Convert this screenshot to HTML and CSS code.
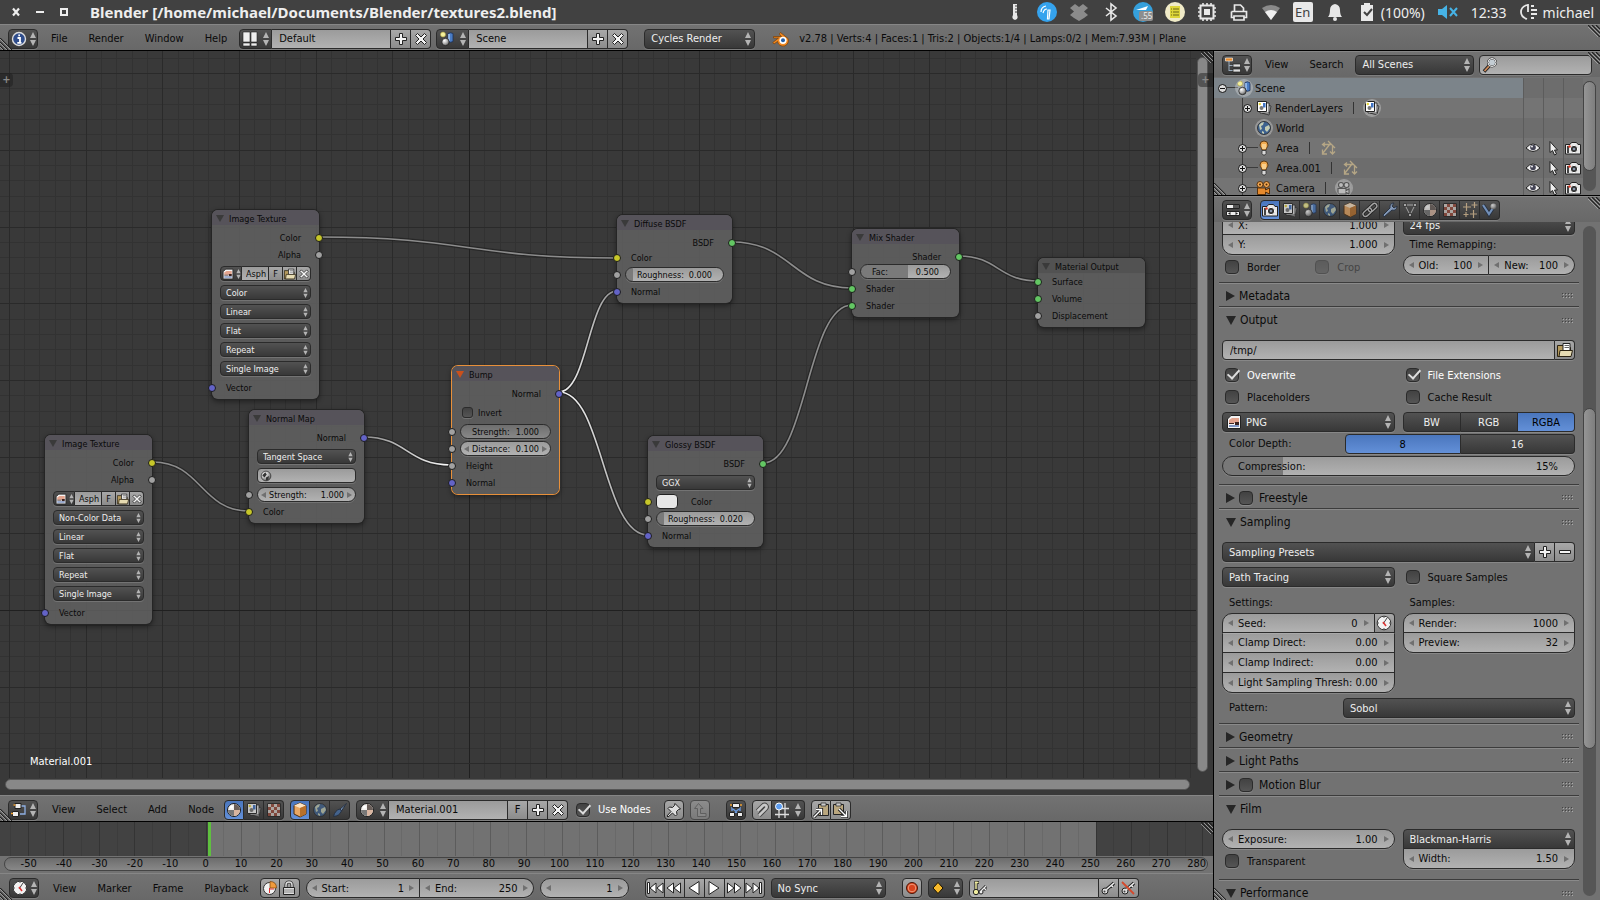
FILE: index.html
```html
<!DOCTYPE html>
<html lang="en">
  <head>
    <meta charset="UTF-8" />
    <meta name="viewport" content="width=device-width, initial-scale=1.0" />
    <title>Blender [/home/michael/Documents/Blender/textures2.blend]</title>
    <link rel="stylesheet" href="styles.css">
  </head>
  <body>
    <!-- icon set -->
    <svg class="sprite" width="0" height="0" aria-hidden="true">
      <defs>
        <radialGradient id="ballFill" cx="35%" cy="30%" r="75%">
          <stop offset="0" stop-color="#fff" />
          <stop offset="0.5" stop-color="#bbb" />
          <stop offset="1" stop-color="#555" />
        </radialGradient>
        <linearGradient id="linkOut" x1="0" x2="1">
          <stop offset="0" stop-color="#fff" />
          <stop offset="1" stop-color="#8c8c8c" />
        </linearGradient>
        <linearGradient id="linkIn" x1="0" x2="1">
          <stop offset="0" stop-color="#8c8c8c" />
          <stop offset="1" stop-color="#fff" />
        </linearGradient>
        <symbol id="arrows" viewBox="0 0 6 14">
          <path d="M3 0L6 6H0ZM3 14L0 8H6Z" fill="#b4b4b4" />
        </symbol>
        <symbol id="dots" viewBox="0 0 11 5">
          <path d="M0 1h1M3 1h1M6 1h1M9 1h1M0 4h1M3 4h1M6 4h1M9 4h1" stroke="#444" transform="translate(0 -.5)" />
          <path d="M1 2h1M4 2h1M7 2h1M10 2h1M1 5h1M4 5h1M7 5h1M10 5h1" stroke="#aaa" transform="translate(0 -.5)" />
        </symbol>
        <symbol id="grip" viewBox="0 0 12 12">
          <path d="M0 0L12 12M4 0L12 8M8 0L12 4" stroke="#222" stroke-width="1.2" />
          <path d="M-1 1L11 13M3 1L12 10M7 1L12 6" stroke="#aaa" stroke-width="0.8" />
        </symbol>
        <symbol id="gripBottom" viewBox="0 0 12 12">
          <path d="M0 0L12 12M0 4L8 12M0 8L4 12" stroke="#222" stroke-width="1.2" />
          <path d="M0 1L11 12M0 5L7 12M0 9L3 12" stroke="#aaa" stroke-width="0.8" />
        </symbol>
        <symbol id="plus" viewBox="0 0 16 16">
          <path d="M6.500 2.500h3v4h4v3h-4v4h-3v-4h-4v-3h4Z" fill="#f4f4f4" stroke="#222" />
        </symbol>
        <symbol id="minus" viewBox="0 0 16 16">
          <path d="M2.500 6.500h11v3h-11Z" fill="#f4f4f4" stroke="#222" />
        </symbol>
        <symbol id="cross" viewBox="0 0 16 16">
          <path d="M4.500 2.500L8 6l3.500-3.500 2 2L10 8l3.500 3.500-2 2L8 10l-3.500 3.500-2-2L6 8 2.500 4.500Z" fill="#f4f4f4" stroke="#222" />
        </symbol>
        <symbol id="info" viewBox="0 0 16 16">
          <circle cx="8" cy="8" r="6.500" fill="#2f4d8c" stroke="#ddd" stroke-width="1.400" />
          <path d="M6.500 7H9v4.500M6.300 11.800h4.200M7.300 4.300h1.700" stroke="#fff" stroke-width="1.800" fill="none" />
        </symbol>
        <symbol id="screen" viewBox="0 0 16 16">
          <path d="M1 1h7v10H1ZM9 1h6v10H9ZM1 12h7v3H1ZM9 12h6v3H9Z" fill="#eee" stroke="#222" stroke-width="0.600" />
        </symbol>
        <symbol id="scene" viewBox="0 0 16 16">
          <circle cx="4" cy="3.500" r="2.500" fill="#f4ef9c" stroke="#a99f3c" stroke-width="0.600" />
          <path d="M9 2.500q2.500-1.500 5 0v8q-2.500 1.500-5 0Z" fill="#4a7cc4" stroke="#1b2f55" stroke-width="0.800" />
          <path d="M10 3v7" stroke="#a6c8f5" stroke-width="1.500" />
          <circle cx="6.500" cy="11" r="3.700" fill="url(#ballFill)" stroke="#222" stroke-width="0.800" />
        </symbol>
        <symbol id="layers" viewBox="0 0 16 16">
          <path d="M6 4.500L15 6l-2 9-7-2Z" fill="#ccc" stroke="#222" stroke-width="0.800" />
          <path d="M4 3h9v10H4Z" fill="#e6e6e6" stroke="#222" stroke-width="0.800" />
          <path d="M1.500 1.500h9v10h-9Z" fill="#fff" stroke="#222" />
          <path d="M7 3h2.500v4.500H7Z" fill="#3f74c6" />
          <circle cx="5.500" cy="8" r="2" fill="#777" />
          <circle cx="3.800" cy="4" r="1.200" fill="#e8d838" />
        </symbol>
        <symbol id="world" viewBox="0 0 16 16">
          <circle cx="8" cy="8" r="6.500" fill="#3e628f" stroke="#222" stroke-width="0.800" />
          <path d="M3 5q2-3 5-3l-1 3-2 1 1 3-2 1ZM9 7l4-2 1 3-3 4-2-2ZM6 11l2 1v2l-2-1Z" fill="#c3ccb4" />
        </symbol>
        <symbol id="lamp" viewBox="0 0 16 16">
          <path d="M8 1a4 4 0 0 1 4 4c0 2-2 3-2 5H6C6 8 4 7 4 5a4 4 0 0 1 4-4Z" fill="#f0aa50" stroke="#52310d" stroke-width="0.900" />
          <path d="M6 10.500h4v3l-1 1.500H7l-1-1.500Z" fill="#d8d8d8" stroke="#333" stroke-width="0.800" />
          <path d="M7 4v5M9 4v5" stroke="#fff3c8" />
        </symbol>
        <symbol id="lampdata" viewBox="0 0 16 16">
          <path d="M8 1l7 7M3 4.500h8M5 2.500L2.500 4.500 5 6.500M10 4L3 13M2.500 9.500V14H7M12.500 6v8M10 11.500l2.500 2.500 2.500-2.500" stroke="#b5a685" stroke-width="1.300" fill="none" />
        </symbol>
        <symbol id="moviecam" viewBox="0 0 16 16">
          <path d="M1.500 8h8v2l4-2v6l-4-2v2.500h-8Z" fill="#e58a2e" stroke="#4f2904" stroke-width="0.900" />
          <circle cx="4" cy="4.500" r="3" fill="#f3a955" stroke="#4f2904" stroke-width="0.900" />
          <circle cx="10.500" cy="4.500" r="3" fill="#f3a955" stroke="#4f2904" stroke-width="0.900" />
          <circle cx="4" cy="4.500" r="1" fill="#4f2904" />
          <circle cx="10.500" cy="4.500" r="1" fill="#4f2904" />
        </symbol>
        <symbol id="camdata" viewBox="0 0 16 16">
          <g fill="#bbb" stroke="#555" stroke-width="1.100">
            <path d="M2 8.500h8v2l3-1.500v5l-3-1.500V14H2Z" />
            <circle cx="5" cy="5" r="2.500" />
            <circle cx="10.500" cy="5" r="2.500" />
          </g>
        </symbol>
        <symbol id="camera" viewBox="0 0 16 16">
          <path d="M0.500 4.500H5L6.500 2.500h5L13 4.500h2.500v9.500h-15Z" fill="#e8e8e8" stroke="#222" />
          <path d="M2 6h2v7H2Z" fill="#444" />
          <circle cx="9" cy="9" r="3.700" fill="#333" stroke="#fff" />
          <circle cx="9" cy="9" r="1.300" fill="#8895aa" />
          <circle cx="4.500" cy="6.500" r="1.200" fill="#e03a24" />
        </symbol>
        <symbol id="cursor" viewBox="0 0 16 16">
          <path d="M5 1.500V12.500L7.500 10.500 9.500 15l2-1-2-4H12.500Z" fill="#eee" stroke="#222" />
        </symbol>
        <symbol id="eye" viewBox="0 0 16 16">
          <path d="M1 8q7-8 14 0q-7 7-14 0Z" fill="#eee" stroke="#222" />
          <circle cx="8" cy="7.500" r="2.800" fill="#445" />
          <circle cx="7" cy="6.500" r="0.900" fill="#fff" />
        </symbol>
        <symbol id="tree" viewBox="0 0 16 16">
          <path d="M4 4v10M4 8.500h5M4 13.500h5" stroke="#9ab" />
          <path d="M0.500 1h7v3h-7Z" fill="#e58a2e" stroke="#fff" stroke-width="0.600" />
          <path d="M8 7h7.500v3H8ZM8 12h7.500v3H8Z" fill="#ddd" stroke="#222" stroke-width="0.700" />
        </symbol>
        <symbol id="search" viewBox="0 0 16 16">
          <path d="M8 8L2 14.500" stroke="#222" stroke-width="3.500" />
          <path d="M8 8L2.500 14" stroke="#d08a58" stroke-width="1.800" />
          <circle cx="10" cy="5.500" r="4" fill="#c4cdd4" stroke="#333" stroke-width="2" />
          <circle cx="10" cy="5.500" r="4" fill="none" stroke="#f4f4f4" />
        </symbol>
        <symbol id="props" viewBox="0 0 16 16">
          <path d="M1.500 2.500h13v4h-13ZM1.500 9.500h13v4h-13Z" fill="#eee" stroke="#222" />
          <path d="M8 3h6v3H8Z" fill="#555" />
          <path d="M5.500 10v3L3 11.500ZM10.500 10v3l2.500-1.500Z" fill="#222" />
        </symbol>
        <symbol id="cube" viewBox="0 0 16 16">
          <path d="M8 1l6 2.500v8.500L8 15 2 12V3.500Z" fill="#e9a763" stroke="#4d2b0a" />
          <path d="M2 3.500L8 6l6-2.500L8 1Z" fill="#fbe3c4" />
          <path d="M8 6v9l6-3V3.500Z" fill="#b9712b" />
        </symbol>
        <symbol id="chain" viewBox="0 0 16 16">
          <g fill="none" transform="rotate(-42 8 8)">
            <path d="M2 5.500h5a2.500 2.500 0 0 1 0 5H2a2.500 2.500 0 0 1 0-5ZM9 5.500h5a2.500 2.500 0 0 1 0 5H9a2.500 2.500 0 0 1 0-5Z" stroke="#111" stroke-width="3" />
            <path d="M2 5.500h5a2.500 2.500 0 0 1 0 5H2a2.500 2.500 0 0 1 0-5ZM9 5.500h5a2.500 2.500 0 0 1 0 5H9a2.500 2.500 0 0 1 0-5Z" stroke="#ccc" stroke-width="1.400" />
          </g>
        </symbol>
        <symbol id="wrench" viewBox="0 0 16 16">
          <path d="M2 15l-1-2 7-7c-.5-3 1-5 4-5l-2 3 2 2 3-2c0 3-2 5-5 4Z" fill="#9dbbe6" stroke="#1c2a40" />
        </symbol>
        <symbol id="mesh" viewBox="0 0 16 16">
          <path d="M3 3h10L8 13Z" fill="none" stroke="#ccc" />
          <path d="M1.500 1.500h3v3h-3ZM11.500 1.500h3v3h-3ZM6.500 11.500h3v3h-3Z" fill="#ccc" stroke="#222" stroke-width="0.800" />
        </symbol>
        <symbol id="material" viewBox="0 0 16 16">
          <circle cx="8" cy="8" r="6.500" fill="#f3f0ed" stroke="#1a1a1a" />
          <path d="M8 2a6 6 0 0 1 6 6H8Z" fill="#6a5f5a" />
          <path d="M8 14a6 6 0 0 1-6-6h6Z" fill="#777" />
          <path d="M8 8h6a6 6 0 0 1-6 6Z" fill="#d9b5a0" />
          <circle cx="5.500" cy="5" r="1.500" fill="#fff" />
        </symbol>
        <symbol id="texture" viewBox="0 0 16 16">
          <path d="M1.500 1.500h13v13h-13Z" fill="#d8cfc9" stroke="#222" />
          <path d="M5 2h3v3H5ZM11 2h3v3h-3ZM2 5h3v3H2ZM8 5h3v3H8ZM5 8h3v3H5ZM11 8h3v3h-3ZM2 11h3v3H2ZM8 11h3v3H8Z" fill="#9b4a3a" />
        </symbol>
        <symbol id="particles" viewBox="0 0 16 16">
          <path d="M4.500 1v8M1 5h8M12.500 0v6M9.500 3h6M11.500 8v8M8 12h7M4 10v5M1.500 12.500h5" stroke="#e6c79b" stroke-width="1.200" />
        </symbol>
        <symbol id="physics" viewBox="0 0 16 16">
          <path d="M1 3l6 9 4-6" fill="none" stroke="#1c2a40" stroke-width="4" />
          <path d="M1 3l6 9 4-6" fill="none" stroke="#86b0ea" stroke-width="2.200" />
          <circle cx="11.500" cy="4.500" r="3" fill="url(#ballFill)" />
        </symbol>
        <symbol id="folder" viewBox="0 0 16 16">
          <path d="M0.500 3.500h6l1 2h6v9h-13Z" fill="#b59a5d" stroke="#2c2413" />
          <path d="M6 1.500h7v7H6Z" fill="#fff" stroke="#222" />
          <path d="M7.500 3.500H12M7.500 5.500H12" stroke="#666" />
          <path d="M3 8.500h12.500l-1.500 6H2Z" fill="#e6dbb2" stroke="#2c2413" />
        </symbol>
        <symbol id="image" viewBox="0 0 16 16">
          <path d="M5 1.500h9.500v13h-13V5Z" fill="#f4f4f4" stroke="#222" />
          <path d="M6 4h7v5H3V6Z" fill="#e3a48e" />
          <path d="M3 9h5v1H3ZM9 8h4v3H9Z" fill="#3b2320" />
          <path d="M3 11h10v2H3Z" fill="#7f96c4" />
        </symbol>
        <symbol id="nodes" viewBox="0 0 16 16">
          <path d="M10 4h4v8H9" stroke="#8fb0e4" stroke-width="1.300" fill="none" />
          <path d="M4 1.500h6v5H4ZM1.500 9.500h6v5h-6Z" fill="#eee" stroke="#222" />
          <path d="M2.500 3h2M0 11.500h2" stroke="#f0a030" stroke-width="1.500" />
        </symbol>
        <symbol id="brush" viewBox="0 0 16 16">
          <path d="M14.500 1.500L8 7l1.500 2Z" fill="#88aede" stroke="#1c2a40" />
          <path d="M8 7q-5 1-6.500 7.500Q7.500 14 9.500 9Z" fill="#4672ad" stroke="#1c2a40" />
        </symbol>
        <symbol id="pin" viewBox="0 0 16 16">
          <path d="M9 1.500l5.500 5.500-2 .5-2 2 .5 3-1.500 1.500-3-3L2 15l-1-1 4-4.500-3-3L3.500 5l3 .5 2-2Z" fill="#ddd" stroke="#222" />
        </symbol>
        <symbol id="parent" viewBox="0 0 16 16">
          <path d="M6.500 1.500l4.500 5H8.500v5H14v3H5.500v-8H2.500Z" fill="#a5a5a5" stroke="#555" />
        </symbol>
        <symbol id="autosnap" viewBox="0 0 16 16">
          <path d="M4 5v4M12 5v4M5 7l6 5M11 7l-6 5" stroke="#6c9be0" stroke-width="1.400" />
          <path d="M4.500 1.500h7v4h-7ZM1.500 10.500h5v4h-5ZM9.500 10.500h5v4h-5Z" fill="#eee" stroke="#222" />
          <path d="M2 3h2M12 3h2" stroke="#f0a030" stroke-width="1.500" />
        </symbol>
        <symbol id="magnet" viewBox="0 0 16 16">
          <path d="M4 13.500L10.500 7q2-2 .5-3.500t-3.500.5L2.500 9" fill="none" stroke="#444" stroke-width="4.500" transform="translate(1 0)" />
          <path d="M4 13.500L10.500 7q2-2 .5-3.500t-3.500.5L2.500 9" fill="none" stroke="#c8c8c8" stroke-width="2.500" transform="translate(1 0)" />
        </symbol>
        <symbol id="snapgrid" viewBox="0 0 16 16">
          <path d="M5 8v8M11 1v15M1 12.500h14M8 6.500h7" stroke="#ddd" stroke-width="1.300" />
          <circle cx="5" cy="4.500" r="3.500" fill="#5d9df0" stroke="#fff" />
        </symbol>
        <symbol id="copy" viewBox="0 0 16 16">
          <path d="M5.500 2.500h10v11h-10Z" fill="#b9a67e" stroke="#222" />
          <path d="M8 1h5v3H8Z" fill="#ccc" stroke="#222" stroke-width="0.700" />
          <path d="M1 15l6-6M3 7.500h5.500V13" stroke="#222" stroke-width="3.200" fill="none" />
          <path d="M1 15l6.500-6.500M3 7.500h5.500V13" stroke="#fff" stroke-width="1.400" fill="none" />
        </symbol>
        <symbol id="paste" viewBox="0 0 16 16">
          <path d="M1.500 2.500h10v10h-10Z" fill="#b9a67e" stroke="#222" />
          <path d="M4 1h5v3H4Z" fill="#ccc" stroke="#222" stroke-width="0.700" />
          <path d="M7 7l7 7M9 14.500h5.500V9" stroke="#222" stroke-width="3.200" fill="none" />
          <path d="M7 7l7 7M9 14.500h5.500V9" stroke="#fff" stroke-width="1.400" fill="none" />
        </symbol>
        <symbol id="clock" viewBox="0 0 16 16">
          <circle cx="8" cy="8" r="6.800" fill="#f2f2f2" stroke="#333" />
          <path d="M7 9l4-6" stroke="#444" />
          <path d="M7 7l3 4" stroke="#d33" stroke-width="1.500" />
          <path d="M8 2v1M8 13v1M2 8h1M13 8h1" stroke="#555" />
        </symbol>
        <symbol id="preview" viewBox="0 0 16 16">
          <circle cx="7.500" cy="8.500" r="6" fill="#f2f2f2" stroke="#333" />
          <path d="M8 8V1.500q6.500 0 6.500 6.500Z" fill="#f09a3c" stroke="#7a3f05" stroke-width="0.700" />
          <path d="M7.500 8v5M8 9h4" stroke="#d33" />
        </symbol>
        <symbol id="lock" viewBox="0 0 16 16">
          <path d="M5 8V5a3 3 0 0 1 6 0v3" fill="none" stroke="#333" stroke-width="3.200" />
          <path d="M5 8V5a3 3 0 0 1 6 0v3" fill="none" stroke="#ddd" stroke-width="1.400" />
          <path d="M2.500 7.500h11v7h-11Z" fill="#ddd" stroke="#222" />
          <path d="M3 10h10M3 12h10" stroke="#888" />
        </symbol>
        <symbol id="first" viewBox="0 0 18 16">
          <path d="M1.500 2.500h2v11h-2ZM10 3v10L4 8ZM17 3v10l-6-5Z" fill="#fff" stroke="#222" />
        </symbol>
        <symbol id="prev" viewBox="0 0 18 16">
          <path d="M8.500 3v10L2 8ZM15.500 3v10L9 8Z" fill="#fff" stroke="#222" />
        </symbol>
        <symbol id="back" viewBox="0 0 18 16">
          <path d="M14 1.500v13L4 8Z" fill="#fff" stroke="#222" />
        </symbol>
        <symbol id="magicball" viewBox="0 0 16 16">
          <circle cx="8" cy="8" r="6.500" fill="url(#ballFill)" stroke="#333" />
          <path d="M3 7l4-4 2 3-3 4ZM8 10l4-2-1 5-3 1Z" fill="#333" />
        </symbol>
        <symbol id="record" viewBox="0 0 16 16">
          <circle cx="8" cy="8" r="5.500" fill="#d8431d" stroke="#4a1505" />
          <circle cx="8" cy="8" r="3.800" fill="none" stroke="#f29a78" />
        </symbol>
        <symbol id="keyframe" viewBox="0 0 16 16">
          <path d="M8 2.500L13 8l-5 5.500L3 8Z" fill="#f7b92b" stroke="#1a1200" />
        </symbol>
        <symbol id="key" viewBox="0 0 16 16">
          <path d="M6.500 9.500L14 3M11 5l2 2" stroke="#222" stroke-width="3.600" />
          <circle cx="5" cy="11" r="3" fill="#ddd" stroke="#222" />
          <path d="M6.500 9.500L14 3M11 5l2 2" stroke="#eee" stroke-width="1.600" />
          <circle cx="4.500" cy="11.500" r="1" fill="#444" />
        </symbol>
        <symbol id="keyset" viewBox="0 0 16 16">
          <path d="M4 1v9M3 2.500h4" stroke="#222" stroke-width="3.200" />
          <path d="M4 1.500v9M3 2.500h3.500" stroke="#f1eda0" stroke-width="1.500" />
          <circle cx="4" cy="12" r="2.700" fill="#f1eda0" stroke="#222" />
          <path d="M9 11l5-5M12 8l2 2" stroke="#222" stroke-width="3" />
          <circle cx="9" cy="12" r="2" fill="#eee" stroke="#222" />
          <path d="M9 11l5-5M12 8l2 2" stroke="#eee" stroke-width="1.300" />
        </symbol>
        <symbol id="blender" viewBox="0 0 18 16">
          <path d="M8.500 1.500L16 7.500a5.500 5.500 0 1 1-10.500 3L2 13l-1.200-1.500L6.500 7H1.500V5.500h8L7.300 3Z" fill="#f28a22" stroke="#7a3d05" stroke-width="0.700" />
          <circle cx="11" cy="9.300" r="3.600" fill="#fff" />
          <circle cx="11" cy="9.300" r="2" fill="#2660a8" />
        </symbol>
      </defs>
    </svg>

    <div class="titlebar">
      <div class="window-buttons">
        <button aria-label="Close"><svg width="10" height="10"><path d="M2 1.500L8 8.500M8 1.500L2 8.500" stroke="#eee" stroke-width="2.200" /></svg></button>
        <button aria-label="Minimize"><svg width="10" height="10"><path d="M1 5h8" stroke="#eee" stroke-width="2" /></svg></button>
        <button aria-label="Maximize"><svg width="10" height="10"><path d="M2 2h6v6H2Z" fill="none" stroke="#eee" stroke-width="2" /></svg></button>
      </div>
      <h1>Blender [/home/michael/Documents/Blender/textures2.blend]</h1>
      <div class="tray">
        <svg width="20" height="22"><path d="M8 3h4v11q2 4-2 5-4-1-2-5Z" fill="#e8e8e8" /><path d="M10 5h3M10 8h3M10 11h3" stroke="#414141" /></svg>
        <svg width="20" height="22"><circle cx="10" cy="11" r="10" fill="#35a3ee" /><path d="M11 9h2l-1 9h-1.500ZM10 8Q7 8 6 12M9 5Q4 6 4 11" stroke="#fff" fill="none" stroke-width="1.200" /></svg>
        <svg width="20" height="22"><path d="M6 3l4 3 4-3 5 4-4 3.500 4 3.500-4 3-5 3-5-3-4-3 4-3.500L1 7Z" fill="#8b8b8b" /></svg>
        <svg width="20" height="22"><path d="M5 7l10 8-5 4V3l5 4L5 15" fill="none" stroke="#e8e8e8" stroke-width="1.600" /></svg>
        <svg width="20" height="22"><circle cx="10" cy="11" r="10" fill="#35a0dc" /><path d="M3 9l12-4-2 4Z" fill="#fff" /><rect x="6" y="10" width="14" height="10" rx="2" fill="#8d8d8d" /><text x="8" y="18" font-size="8" fill="#eee">.55</text></svg>
        <svg width="20" height="22"><circle cx="10" cy="11" r="10" fill="#f0ebc8" /><rect x="5" y="5" width="10" height="12" fill="#ded63a" /><path d="M6 8h1M8 8h6M6 11h1M8 11h6M6 14h1M8 14h6" stroke="#6a6614" /></svg>
        <svg width="20" height="22"><path d="M3.500 4.500h13v13h-13Z" fill="none" stroke="#e8e8e8" stroke-width="2" /><path d="M7 8h6v6H7Z" fill="#e8e8e8" /><path d="M6 2v3M10 2v3M14 2v3M6 17v3M10 17v3M14 17v3M1 7h3M1 11h3M1 15h3M16 7h3M16 11h3M16 15h3" stroke="#e8e8e8" stroke-width="1.600" /></svg>
        <svg width="20" height="22"><path d="M5.500 10V4h6l3 3v3M2.500 10.500h15v6h-2M2.500 10.500v6h2M5 15h10v4H5Z" fill="none" stroke="#e8e8e8" stroke-width="1.700" /></svg>
        <svg width="20" height="22"><path d="M1 7q9-6 18 0l-9 12Z" fill="#8a8a8a" /><path d="M4 11q6-4 12 0l-6 8Z" fill="#f0f0f0" /></svg>
        <span class="lang">En</span>
        <svg width="20" height="22"><path d="M3 16q2-2 2-7 0-5 5-6 5 1 5 6 0 5 2 7Z" fill="#e8e8e8" /><circle cx="10" cy="18" r="2" fill="#e8e8e8" /></svg>
        <svg width="20" height="22"><path d="M4 4h3V2h6v2h3v16H4Z" fill="#e8e8e8" /><path d="M7 11l3 3 5-6" fill="none" stroke="#414141" stroke-width="2" /></svg>
        <span class="charge">(100%)</span>
        <svg width="22" height="22"><path d="M1 8h4l5-4v14l-5-4H1Z" fill="#46b3e6" /><path d="M13 7l7 8M20 7l-7 8" stroke="#46b3e6" stroke-width="2" /></svg>
        <span class="time">12:33</span>
        <svg width="20" height="22"><path d="M8 4q-6 2-6 7t6 7M9 3v8M12 5h3M12 9h6M12 13h6M12 17h3" fill="none" stroke="#e8e8e8" stroke-width="1.800" /></svg>
        <span class="user">michael</span>
      </div>
    </div>

    <header class="header info-header">
      <svg class="grip grip-bl"><use href="#gripBottom" /></svg>
      <svg class="grip grip-tr"><use href="#grip" /></svg>
      <button class="dark editor-type" aria-label="Editor type"><svg class="icon"><use href="#info" /></svg><svg class="arrows"><use href="#arrows" /></svg></button>
      <nav class="menus">
        <button>File</button><button>Render</button><button>Window</button><button>Help</button>
      </nav>
      <div class="join id-block">
        <button class="dark id-icon" aria-label="Browse screens"><svg class="icon"><use href="#screen" /></svg><svg class="arrows"><use href="#arrows" /></svg></button>
        <input class="field" type="text" value="Default" aria-label="Screen" />
        <button class="light tool" aria-label="Add screen"><svg class="icon"><use href="#plus" /></svg></button>
        <button class="light tool" aria-label="Delete screen"><svg class="icon"><use href="#cross" /></svg></button>
      </div>
      <div class="join id-block">
        <button class="dark id-icon" aria-label="Browse scenes"><svg class="icon"><use href="#scene" /></svg><svg class="arrows"><use href="#arrows" /></svg></button>
        <input class="field" type="text" value="Scene" aria-label="Scene" />
        <button class="light tool" aria-label="Add scene"><svg class="icon"><use href="#plus" /></svg></button>
        <button class="light tool" aria-label="Delete scene"><svg class="icon"><use href="#cross" /></svg></button>
      </div>
      <span class="menu engine"><select aria-label="Render engine"><option>Cycles Render</option></select><svg class="arrows"><use href="#arrows" /></svg></span>
      <svg class="logo"><use href="#blender" /></svg>
      <span class="stats">v2.78 | Verts:4 | Faces:1 | Tris:2 | Objects:1/4 | Lamps:0/2 | Mem:7.93M | Plane</span>
    </header>

    <main class="workspace">
      <div class="left-column">
        <section class="canvas" id="canvas">
          <svg class="grid" id="grid"></svg>
          <svg class="wires">
            <g fill="none" stroke="#1f1f1f" stroke-width="4" stroke-opacity="0.700">
              <path d="M319 186C468 186 468 207 617 207" />
              <path d="M153 411C201 411 201 460 249 460" />
              <path d="M364 386C407 386 407 414 451 414" />
              <path d="M559 341C588 341 588 240 617 240" />
              <path d="M559 341C603 341 603 484 648 484" />
              <path d="M732 191C792 191 792 237 852 237" />
              <path d="M763 412C807 412 807 254 852 254" />
              <path d="M959 205C998 205 998 230 1038 230" />
            </g>
            <g fill="none" stroke="#8c8c8c" stroke-width="1.600">
              <path d="M319 186C468 186 468 207 617 207" />
              <path d="M153 411C201 411 201 460 249 460" />
              <path d="M364 386C407 386 407 414 451 414" stroke="url(#linkIn)" />
              <path d="M559 341C588 341 588 240 617 240" stroke="url(#linkOut)" />
              <path d="M559 341C603 341 603 484 648 484" stroke="url(#linkOut)" />
              <path d="M732 191C792 191 792 237 852 237" />
              <path d="M763 412C807 412 807 254 852 254" />
              <path d="M959 205C998 205 998 230 1038 230" />
            </g>
          </svg>

          <article class="node image-texture-a">
            <h2>Image Texture</h2>
            <div class="outputs">
              <div class="row">Color<i class="socket yellow"></i></div>
              <div class="row">Alpha<i class="socket gray"></i></div>
            </div>
            <div class="widgets">
              <div class="join">
                <button class="dark image-pick" aria-label="Browse images"><svg class="icon"><use href="#image" /></svg><svg class="arrows"><use href="#arrows" /></svg></button>
                <input class="field" type="text" value="Asph" aria-label="Image name" />
                <button class="light tool">F</button>
                <button class="light tool" aria-label="Open image"><svg class="icon"><use href="#folder" /></svg></button>
                <button class="light tool" aria-label="Unlink image"><svg class="icon"><use href="#cross" /></svg></button>
              </div>
              <span class="menu"><select aria-label="Color space"><option>Color</option></select><svg class="arrows"><use href="#arrows" /></svg></span>
              <span class="menu"><select aria-label="Interpolation"><option>Linear</option></select><svg class="arrows"><use href="#arrows" /></svg></span>
              <span class="menu"><select aria-label="Projection"><option>Flat</option></select><svg class="arrows"><use href="#arrows" /></svg></span>
              <span class="menu"><select aria-label="Extension"><option>Repeat</option></select><svg class="arrows"><use href="#arrows" /></svg></span>
              <span class="menu"><select aria-label="Source"><option>Single Image</option></select><svg class="arrows"><use href="#arrows" /></svg></span>
            </div>
            <div class="row"><i class="socket violet"></i>Vector</div>
          </article>

          <article class="node image-texture-b">
            <h2>Image Texture</h2>
            <div class="outputs">
              <div class="row">Color<i class="socket yellow"></i></div>
              <div class="row">Alpha<i class="socket gray"></i></div>
            </div>
            <div class="widgets">
              <div class="join">
                <button class="dark image-pick" aria-label="Browse images"><svg class="icon"><use href="#image" /></svg><svg class="arrows"><use href="#arrows" /></svg></button>
                <input class="field" type="text" value="Asph" aria-label="Image name" />
                <button class="light tool">F</button>
                <button class="light tool" aria-label="Open image"><svg class="icon"><use href="#folder" /></svg></button>
                <button class="light tool" aria-label="Unlink image"><svg class="icon"><use href="#cross" /></svg></button>
              </div>
              <span class="menu"><select aria-label="Color space"><option>Non-Color Data</option></select><svg class="arrows"><use href="#arrows" /></svg></span>
              <span class="menu"><select aria-label="Interpolation"><option>Linear</option></select><svg class="arrows"><use href="#arrows" /></svg></span>
              <span class="menu"><select aria-label="Projection"><option>Flat</option></select><svg class="arrows"><use href="#arrows" /></svg></span>
              <span class="menu"><select aria-label="Extension"><option>Repeat</option></select><svg class="arrows"><use href="#arrows" /></svg></span>
              <span class="menu"><select aria-label="Source"><option>Single Image</option></select><svg class="arrows"><use href="#arrows" /></svg></span>
            </div>
            <div class="row"><i class="socket violet"></i>Vector</div>
          </article>

          <article class="node wide normal-map">
            <h2>Normal Map</h2>
            <div class="outputs">
              <div class="row">Normal<i class="socket violet"></i></div>
            </div>
            <div class="widgets">
              <span class="menu"><select aria-label="Space"><option>Tangent Space</option></select><svg class="arrows"><use href="#arrows" /></svg></span>
              <label class="iconfield"><svg class="icon"><use href="#magicball" /></svg><input type="text" aria-label="UV map" /></label>
            </div>
            <div class="row"><i class="socket gray"></i><label class="num"><span>Strength:</span><input type="text" value="1.000" /></label></div>
            <div class="row"><i class="socket yellow"></i>Color</div>
          </article>

          <article class="node bump active">
            <h2>Bump</h2>
            <div class="outputs">
              <div class="row">Normal<i class="socket violet"></i></div>
            </div>
            <div class="widgets">
              <label class="check"><input type="checkbox" />Invert</label>
            </div>
            <div class="row"><i class="socket gray"></i><label class="num slider full"><span>Strength:</span><input type="text" value="1.000" /></label></div>
            <div class="row"><i class="socket gray"></i><label class="num"><span>Distance:</span><input type="text" value="0.100" /></label></div>
            <div class="row"><i class="socket gray"></i>Height</div>
            <div class="row"><i class="socket violet"></i>Normal</div>
          </article>

          <article class="node wide diffuse">
            <h2>Diffuse BSDF</h2>
            <div class="outputs">
              <div class="row">BSDF<i class="socket green"></i></div>
            </div>
            <div class="row"><i class="socket yellow"></i>Color</div>
            <div class="row"><i class="socket gray"></i><label class="num slider low"><span>Roughness:</span><input type="text" value="0.000" /></label></div>
            <div class="row"><i class="socket violet"></i>Normal</div>
          </article>

          <article class="node wide glossy">
            <h2>Glossy BSDF</h2>
            <div class="outputs">
              <div class="row">BSDF<i class="socket green"></i></div>
            </div>
            <div class="widgets">
              <span class="menu"><select aria-label="Distribution"><option>GGX</option></select><svg class="arrows"><use href="#arrows" /></svg></span>
            </div>
            <div class="row"><i class="socket yellow"></i><button class="swatch" aria-label="Color"></button>Color</div>
            <div class="row"><i class="socket gray"></i><label class="num slider low"><span>Roughness:</span><input type="text" value="0.020" /></label></div>
            <div class="row"><i class="socket violet"></i>Normal</div>
          </article>

          <article class="node mix">
            <h2>Mix Shader</h2>
            <div class="outputs">
              <div class="row">Shader<i class="socket green"></i></div>
            </div>
            <div class="row"><i class="socket gray"></i><label class="num slider half"><span>Fac:</span><input type="text" value="0.500" /></label></div>
            <div class="row"><i class="socket green"></i>Shader</div>
            <div class="row"><i class="socket green"></i>Shader</div>
          </article>

          <article class="node output">
            <h2>Material Output</h2>
            <div class="row"><i class="socket green"></i>Surface</div>
            <div class="row"><i class="socket green"></i>Volume</div>
            <div class="row"><i class="socket gray"></i>Displacement</div>
          </article>

          <p class="material-name">Material.001</p>
          <button class="region-tab tab-left" aria-label="Show tool shelf">+</button>
          <div class="scroll-y"></div>
          <div class="scroll-x"></div>
          <button class="region-tab tab-right" aria-label="Show properties">+</button>
          <svg class="grip grip-tr"><use href="#grip" /></svg>
        </section>

        <div class="header node-header">
          <svg class="grip grip-bl"><use href="#gripBottom" /></svg>
          <button class="dark editor-type" aria-label="Editor type"><svg class="icon"><use href="#nodes" /></svg><svg class="arrows"><use href="#arrows" /></svg></button>
          <nav class="menus">
            <button>View</button><button>Select</button><button>Add</button><button>Node</button>
          </nav>
          <div class="join">
            <button class="dark tool on" aria-label="Shader nodes"><svg class="icon"><use href="#material" /></svg></button>
            <button class="dark tool dim" aria-label="Compositing nodes"><svg class="icon"><use href="#layers" /></svg></button>
            <button class="dark tool dim" aria-label="Texture nodes"><svg class="icon"><use href="#texture" /></svg></button>
          </div>
          <div class="join">
            <button class="dark tool on" aria-label="Object"><svg class="icon"><use href="#cube" /></svg></button>
            <button class="dark tool dim" aria-label="World"><svg class="icon"><use href="#world" /></svg></button>
            <button class="dark tool dim" aria-label="Line style"><svg class="icon"><use href="#brush" /></svg></button>
          </div>
          <div class="join id-block">
            <button class="dark id-icon" aria-label="Browse materials"><svg class="icon"><use href="#material" /></svg><svg class="arrows"><use href="#arrows" /></svg></button>
            <input class="field" type="text" value="Material.001" aria-label="Material" />
            <button class="light tool">F</button>
            <button class="light tool" aria-label="Add material"><svg class="icon"><use href="#plus" /></svg></button>
            <button class="light tool" aria-label="Unlink material"><svg class="icon"><use href="#cross" /></svg></button>
          </div>
          <label class="check use-nodes"><input type="checkbox" checked />Use Nodes</label>
          <div class="join"><button class="light tool" aria-label="Pin"><svg class="icon"><use href="#pin" /></svg></button></div>
          <div class="join"><button class="light tool off" aria-label="Go to parent"><svg class="icon"><use href="#parent" /></svg></button></div>
          <div class="join spaced"><button class="dark tool" aria-label="Auto-offset"><svg class="icon"><use href="#autosnap" /></svg></button></div>
          <div class="join">
            <button class="light tool" aria-label="Snap"><svg class="icon"><use href="#magnet" /></svg></button>
            <button class="dark id-icon" aria-label="Snap element"><svg class="icon"><use href="#snapgrid" /></svg><svg class="arrows"><use href="#arrows" /></svg></button>
          </div>
          <div class="join">
            <button class="light tool" aria-label="Copy nodes"><svg class="icon"><use href="#copy" /></svg></button>
            <button class="light tool" aria-label="Paste nodes"><svg class="icon"><use href="#paste" /></svg></button>
          </div>
        </div>

        <section class="timeline">
          <svg class="track" id="track"></svg>
          <div class="ruler" id="ruler"></div>
          <svg class="grip grip-tr"><use href="#grip" /></svg>
          <div class="header timeline-header">
            <svg class="grip grip-bl"><use href="#gripBottom" /></svg>
            <button class="dark editor-type" aria-label="Editor type"><svg class="icon"><use href="#clock" /></svg><svg class="arrows"><use href="#arrows" /></svg></button>
            <nav class="menus">
              <button>View</button><button>Marker</button><button>Frame</button><button>Playback</button>
            </nav>
            <div class="join range-tools">
              <button class="light tool" aria-label="Use preview range"><svg class="icon"><use href="#preview" /></svg></button>
              <button class="light tool" aria-label="Lock time"><svg class="icon"><use href="#lock" /></svg></button>
            </div>
            <div class="join pill">
              <label class="num"><span>Start:</span><input type="text" value="1" /></label>
              <label class="num"><span>End:</span><input type="text" value="250" /></label>
            </div>
            <label class="num frame"><input type="text" value="1" aria-label="Current frame" /></label>
            <div class="join transport">
              <button class="light tool" aria-label="First frame"><svg class="icon"><use href="#first" /></svg></button>
              <button class="light tool" aria-label="Previous keyframe"><svg class="icon"><use href="#prev" /></svg></button>
              <button class="light tool" aria-label="Play backwards"><svg class="icon"><use href="#back" /></svg></button>
              <button class="light tool flip" aria-label="Play"><svg class="icon"><use href="#back" /></svg></button>
              <button class="light tool flip" aria-label="Next keyframe"><svg class="icon"><use href="#prev" /></svg></button>
              <button class="light tool flip" aria-label="Last frame"><svg class="icon"><use href="#first" /></svg></button>
            </div>
            <span class="menu sync"><select aria-label="Sync mode"><option>No Sync</option></select><svg class="arrows"><use href="#arrows" /></svg></span>
            <div class="join spaced"><button class="light tool" aria-label="Record"><svg class="icon"><use href="#record" /></svg></button></div>
            <button class="dark keytype" aria-label="Keyframe type"><svg class="icon"><use href="#keyframe" /></svg><svg class="arrows"><use href="#arrows" /></svg></button>
            <div class="join">
              <label class="iconfield keying"><svg class="icon"><use href="#keyset" /></svg><input type="text" aria-label="Keying set" /></label>
              <button class="light tool" aria-label="Insert keyframe"><svg class="icon"><use href="#key" /></svg></button>
              <button class="light tool" aria-label="Delete keyframe"><svg class="icon" viewBox="0 0 16 16"><use href="#key" /><path d="M2 2L14 14" stroke="#d5492c" stroke-width="1.800" /></svg></button>
            </div>
          </div>
        </section>
      </div>

      <aside class="right-column">
        <section class="outliner">
          <div class="header">
            <svg class="grip grip-tr"><use href="#grip" /></svg>
            <button class="dark editor-type" aria-label="Editor type"><svg class="icon"><use href="#tree" /></svg><svg class="arrows"><use href="#arrows" /></svg></button>
            <nav class="menus"><button>View</button><button>Search</button></nav>
            <span class="menu display-mode"><select aria-label="Display mode"><option>All Scenes</option></select><svg class="arrows"><use href="#arrows" /></svg></span>
            <label class="iconfield find"><svg class="icon"><use href="#search" /></svg><input type="text" aria-label="Search" /></label>
          </div>
          <div class="outliner-body">
            <ul class="items">
              <li class="item selected"><button class="toggle minus" aria-label="Collapse"></button><svg class="icon halo"><use href="#scene" /></svg>Scene<span class="restrict"><i></i><i></i><i></i></span></li>
              <li class="item child"><button class="toggle" aria-label="Expand"></button><svg class="icon"><use href="#layers" /></svg>RenderLayers<b></b><svg class="icon halo"><use href="#layers" /></svg><span class="restrict"><i></i><i></i><i></i></span></li>
              <li class="item leaf"><svg class="icon halo"><use href="#world" /></svg>World<span class="restrict"><i></i><i></i><i></i></span></li>
              <li class="item object"><button class="toggle" aria-label="Expand"></button><svg class="icon"><use href="#lamp" /></svg>Area<b></b><svg class="icon"><use href="#lampdata" /></svg><span class="restrict"><i><svg class="icon"><use href="#eye" /></svg></i><i><svg class="icon"><use href="#cursor" /></svg></i><i><svg class="icon"><use href="#camera" /></svg></i></span></li>
              <li class="item object"><button class="toggle" aria-label="Expand"></button><svg class="icon"><use href="#lamp" /></svg>Area.001<b></b><svg class="icon"><use href="#lampdata" /></svg><span class="restrict"><i><svg class="icon"><use href="#eye" /></svg></i><i><svg class="icon"><use href="#cursor" /></svg></i><i><svg class="icon"><use href="#camera" /></svg></i></span></li>
              <li class="item object"><button class="toggle" aria-label="Expand"></button><svg class="icon"><use href="#moviecam" /></svg>Camera<b></b><svg class="icon halo"><use href="#camdata" /></svg><span class="restrict"><i><svg class="icon"><use href="#eye" /></svg></i><i><svg class="icon"><use href="#cursor" /></svg></i><i><svg class="icon"><use href="#camera" /></svg></i></span></li>
            </ul>
            <div class="scroll"><div class="thumb outliner-thumb"></div></div>
          </div>
          <svg class="grip grip-bl"><use href="#gripBottom" /></svg>
        </section>

        <section class="properties">
          <div class="header">
            <svg class="grip grip-tr"><use href="#grip" /></svg>
            <button class="dark editor-type" aria-label="Editor type"><svg class="icon"><use href="#props" /></svg><svg class="arrows"><use href="#arrows" /></svg></button>
            <div class="join tabs">
              <button class="dark tool on" aria-label="Render"><svg class="icon"><use href="#camera" /></svg></button>
              <button class="dark tool dim" aria-label="Render layers"><svg class="icon"><use href="#layers" /></svg></button>
              <button class="dark tool dim" aria-label="Scene"><svg class="icon"><use href="#scene" /></svg></button>
              <button class="dark tool dim" aria-label="World"><svg class="icon"><use href="#world" /></svg></button>
              <button class="dark tool dim" aria-label="Object"><svg class="icon"><use href="#cube" /></svg></button>
              <button class="dark tool dim" aria-label="Constraints"><svg class="icon"><use href="#chain" /></svg></button>
              <button class="dark tool dim" aria-label="Modifiers"><svg class="icon"><use href="#wrench" /></svg></button>
              <button class="dark tool dim" aria-label="Data"><svg class="icon"><use href="#mesh" /></svg></button>
              <button class="dark tool dim" aria-label="Material"><svg class="icon"><use href="#material" /></svg></button>
              <button class="dark tool dim" aria-label="Texture"><svg class="icon"><use href="#texture" /></svg></button>
              <button class="dark tool dim" aria-label="Particles"><svg class="icon"><use href="#particles" /></svg></button>
              <button class="dark tool dim" aria-label="Physics"><svg class="icon"><use href="#physics" /></svg></button>
            </div>
          </div>
          <div class="properties-body">
            <div class="panels">
              <div class="panel dimensions">
                <div class="columns">
                  <div>
                    <div class="stack continued">
                      <label class="num"><span>X:</span><input type="text" value="1.000" /></label>
                      <label class="num"><span>Y:</span><input type="text" value="1.000" /></label>
                    </div>
                    <div class="columns border-row">
                      <label class="check"><input type="checkbox" />Border</label>
                      <label class="check off"><input type="checkbox" disabled />Crop</label>
                    </div>
                  </div>
                  <div>
                    <span class="menu"><select aria-label="Frame rate"><option>24 fps</option></select><svg class="arrows"><use href="#arrows" /></svg></span>
                    <p class="caption">Time Remapping:</p>
                    <div class="join pill">
                      <label class="num"><span>Old:</span><input type="text" value="100" /></label>
                      <label class="num"><span>New:</span><input type="text" value="100" /></label>
                    </div>
                  </div>
                </div>
              </div>

              <div class="panel"><h2 class="closed">Metadata<svg class="dots"><use href="#dots" /></svg></h2></div>

              <div class="panel">
                <h2>Output<svg class="dots"><use href="#dots" /></svg></h2>
                <div class="panel-body">
                  <div class="join">
                    <input class="field" type="text" value="/tmp/" aria-label="Output path" />
                    <button class="light tool" aria-label="Browse"><svg class="icon"><use href="#folder" /></svg></button>
                  </div>
                  <div class="group">
                    <div class="columns">
                      <label class="check"><input type="checkbox" checked />Overwrite</label>
                      <label class="check"><input type="checkbox" checked />File Extensions</label>
                    </div>
                    <div class="columns">
                      <label class="check"><input type="checkbox" />Placeholders</label>
                      <label class="check"><input type="checkbox" />Cache Result</label>
                    </div>
                  </div>
                  <div class="group">
                    <div class="columns">
                      <span class="menu with-icon"><select aria-label="File format"><option>PNG</option></select><svg class="icon"><use href="#image" /></svg><svg class="arrows"><use href="#arrows" /></svg></span>
                      <div class="join choices"><button class="dark">BW</button><button class="dark">RGB</button><button class="dark on">RGBA</button></div>
                    </div>
                    <div class="depth"><span class="caption">Color Depth:</span><div class="join choices"><button class="dark on">8</button><button class="dark">16</button></div></div>
                    <label class="num slider compression"><span>Compression:</span><input type="text" value="15%" /></label>
                  </div>
                </div>
              </div>

              <div class="panel"><h2 class="closed"><input type="checkbox" aria-label="Freestyle" />Freestyle<svg class="dots"><use href="#dots" /></svg></h2></div>

              <div class="panel sampling">
                <h2>Sampling<svg class="dots"><use href="#dots" /></svg></h2>
                <div class="panel-body">
                  <div class="join">
                    <span class="menu"><select aria-label="Presets"><option>Sampling Presets</option></select><svg class="arrows"><use href="#arrows" /></svg></span>
                    <button class="light tool" aria-label="Add preset"><svg class="icon"><use href="#plus" /></svg></button>
                    <button class="light tool" aria-label="Remove preset"><svg class="icon"><use href="#minus" /></svg></button>
                  </div>
                  <div class="columns">
                    <span class="menu"><select aria-label="Integrator"><option>Path Tracing</option></select><svg class="arrows"><use href="#arrows" /></svg></span>
                    <label class="check"><input type="checkbox" />Square Samples</label>
                  </div>
                  <div class="columns">
                    <div>
                      <p class="caption">Settings:</p>
                      <div class="stack">
                        <div class="seed">
                          <label class="num"><span>Seed:</span><input type="text" value="0" /></label>
                          <button class="light tool" aria-label="Animate seed"><svg class="icon"><use href="#clock" /></svg></button>
                        </div>
                        <label class="num"><span>Clamp Direct:</span><input type="text" value="0.00" /></label>
                        <label class="num"><span>Clamp Indirect:</span><input type="text" value="0.00" /></label>
                        <label class="num"><span>Light Sampling Thresh:</span><input type="text" value="0.00" /></label>
                      </div>
                    </div>
                    <div>
                      <p class="caption">Samples:</p>
                      <div class="stack">
                        <label class="num"><span>Render:</span><input type="text" value="1000" /></label>
                        <label class="num"><span>Preview:</span><input type="text" value="32" /></label>
                      </div>
                    </div>
                  </div>
                  <div class="depth"><span class="caption">Pattern:</span><span class="menu pattern"><select aria-label="Pattern"><option>Sobol</option></select><svg class="arrows"><use href="#arrows" /></svg></span></div>
                </div>
              </div>

              <div class="panel"><h2 class="closed">Geometry<svg class="dots"><use href="#dots" /></svg></h2></div>
              <div class="panel"><h2 class="closed">Light Paths<svg class="dots"><use href="#dots" /></svg></h2></div>
              <div class="panel"><h2 class="closed"><input type="checkbox" aria-label="Motion Blur" />Motion Blur<svg class="dots"><use href="#dots" /></svg></h2></div>

              <div class="panel">
                <h2>Film<svg class="dots"><use href="#dots" /></svg></h2>
                <div class="panel-body">
                  <div class="columns">
                    <div class="group">
                      <label class="num"><span>Exposure:</span><input type="text" value="1.00" /></label>
                      <label class="check"><input type="checkbox" />Transparent</label>
                    </div>
                    <div class="stack">
                      <span class="menu"><select aria-label="Pixel filter"><option>Blackman-Harris</option></select><svg class="arrows"><use href="#arrows" /></svg></span>
                      <label class="num"><span>Width:</span><input type="text" value="1.50" /></label>
                    </div>
                  </div>
                </div>
              </div>

              <div class="panel"><h2>Performance<svg class="dots"><use href="#dots" /></svg></h2></div>
            </div>
            <div class="scroll"><div class="thumb properties-thumb"></div></div>
          </div>
          <svg class="grip grip-bl"><use href="#gripBottom" /></svg>
        </section>
      </aside>
    </main>
    <script src="script.js"></script>
  </body>
</html>
```
FILE: styles.css
```css
:root {
  --dark: linear-gradient(#525252, #383838);
  --light: linear-gradient(#9b9b9b, #b2b2b2);
  --tool: linear-gradient(#a8a8a8, #8c8c8c);
  --blue: linear-gradient(#4a76bd, #6390d8);
  --edge: #2b2b2b;
}
* {
  box-sizing: border-box;
}
body {
  margin: 0;
  height: 100vh;
  display: flex;
  flex-direction: column;
  overflow: hidden;
  background: #727272;
  color: #0a0a0a;
  font-family: "DejaVu Sans Condensed", "DejaVu Sans", sans-serif;
  font-size: 11px;
}
button, input, select {
  font: inherit;
  color: inherit;
  margin: 0;
  padding: 0;
  border: none;
  background: none;
  min-width: 0;
}
h1, h2, p, ul {
  margin: 0;
  padding: 0;
  font-weight: normal;
}
svg {
  flex: none;
}
.sprite {
  position: absolute;
}
.icon {
  width: 16px;
  height: 16px;
}
.arrows {
  width: 6px;
  height: 14px;
}

/* system bar */
.titlebar {
  flex: none;
  height: 24px;
  display: flex;
  align-items: center;
  background: #414141;
  color: #eee;
  font-family: "Noto Sans", sans-serif;
}
.window-buttons {
  display: flex;
  gap: 14px;
  padding: 0 21px 0 11px;
}
.window-buttons button {
  width: 10px;
  height: 10px;
  display: flex;
}
.titlebar h1 {
  font-size: 15px;
  font-weight: bold;
  white-space: nowrap;
}
.tray {
  margin-left: auto;
  padding-right: 6px;
  display: flex;
  align-items: center;
  gap: 12px;
  font-size: 14px;
}
.lang {
  width: 20px;
  height: 20px;
  border-radius: 2px;
  background: #e8e8e8;
  color: #414141;
  font-size: 13px;
  line-height: 20px;
  text-align: center;
}
.charge {
  margin-left: -8px;
}
.user {
  margin-left: -8px;
}

/* editor headers */
.header {
  position: relative;
  flex: none;
  height: 26px;
  padding: 2px 8px 0;
  display: flex;
  align-items: center;
  gap: 5px;
  background: linear-gradient(#727272, #686868);
  border-top: 1px solid #868686;
}
.right-column .header {
  padding-top: 0;
}
.info-header, .node-header {
  height: 27px;
  border-bottom: 1px solid #000;
}
.grip {
  position: absolute;
  width: 12px;
  height: 12px;
}
.grip-tr {
  top: 0;
  right: 0;
}
.grip-bl {
  bottom: 0;
  left: 0;
}
.menus {
  display: flex;
  gap: 1px;
  margin: 0 -3px 0 -2px;
}
.menus button {
  padding: 0 10px;
}
.logo {
  width: 18px;
  height: 16px;
  margin: 0 4px 0 12px;
}
.stats {
  white-space: nowrap;
}
.engine {
  width: 111px;
  margin-left: 11px;
}

/* widgets */
.dark, .light, .menu, .field, .num, .iconfield {
  height: 20px;
  border: 1px solid var(--edge);
  border-radius: 4px;
  box-shadow: 0 1px 0 rgba(255, 255, 255, 0.15);
}
.dark {
  display: flex;
  align-items: center;
  justify-content: center;
  background: var(--dark);
  color: #eee;
}
.dark.on {
  background: var(--blue);
  color: #000;
}
.dim .icon {
  opacity: 0.7;
}
.light {
  display: flex;
  align-items: center;
  justify-content: center;
  background: var(--tool);
}
.light.off {
  opacity: 0.5;
}
.flip .icon {
  transform: scaleX(-1);
}
.tool {
  flex: none;
  width: 20px;
}
.editor-type {
  width: 30px;
  gap: 3px;
}
.id-icon {
  flex: none;
  width: 33px;
  gap: 5px;
}
.join {
  display: flex;
}
.join > * {
  border-radius: 0;
}
.join > * + * {
  border-left-width: 0;
}
.join > :first-child {
  border-radius: 4px 0 0 4px;
}
.join > :last-child {
  border-radius: 0 4px 4px 0;
}
.join > :only-child {
  border-radius: 4px;
}
.field {
  flex: 1;
  padding: 0 7px;
  background: var(--light);
}
.id-block .field {
  flex: none;
  width: 119px;
}
.iconfield {
  display: flex;
  align-items: center;
  padding: 0 2px;
  background: var(--light);
}
.iconfield input {
  flex: 1;
  width: 0;
}
.menu {
  display: grid;
  align-items: center;
  background: var(--dark);
  color: #eee;
}
.menu > * {
  grid-area: 1 / 1;
}
.menu select {
  appearance: none;
  width: 100%;
  padding: 0 6px;
}
.menu .arrows {
  justify-self: end;
  margin-right: 3px;
  pointer-events: none;
}
.menu .icon {
  margin-left: 3px;
}
.menu.with-icon select {
  padding-left: 23px;
}
.num {
  display: flex;
  align-items: center;
  padding: 0 5px;
  border-radius: 10px;
  background: var(--light);
}
.num input {
  flex: 1;
  width: 0;
  text-align: right;
}
.num::before, .num::after {
  content: "";
  border: 3px solid transparent;
}
.num::before {
  border-left-width: 0;
  border-right: 5px solid #707070;
  margin-right: 5px;
}
.num::after {
  border-right-width: 0;
  border-left: 5px solid #707070;
  margin-left: 5px;
}
.slider::before, .slider::after {
  visibility: hidden;
}
.check {
  display: flex;
  align-items: center;
  gap: 8px;
  height: 20px;
  padding-left: 3px;
}
input[type="checkbox"] {
  appearance: none;
  position: relative;
  flex: none;
  width: 14px;
  height: 14px;
  border: 1px solid #2b2b2b;
  border-radius: 4px;
  background: linear-gradient(#424242, #555);
  box-shadow: 0 1px 0 rgba(255, 255, 255, 0.15);
}
input[type="checkbox"]:checked::after {
  content: "";
  position: absolute;
  left: 4px;
  top: -2px;
  width: 5px;
  height: 10px;
  border: solid #ddd;
  border-width: 0 2px 2px 0;
  transform: rotate(42deg);
}
.check:has(:checked) {
  color: #fff;
}
.check.off {
  opacity: 0.45;
}
.caption {
  height: 20px;
  line-height: 20px;
  padding-left: 7px;
}

/* layout */
.workspace {
  flex: 1;
  min-height: 0;
  display: flex;
}
.left-column {
  flex: 1;
  min-width: 0;
  display: flex;
  flex-direction: column;
}
.right-column {
  flex: none;
  width: 387px;
  border-left: 1px solid #000;
  display: flex;
  flex-direction: column;
}

/* node editor */
.canvas {
  position: relative;
  flex: 1;
  min-height: 0;
  overflow: hidden;
  background: #393939;
}
.grid, .wires {
  position: absolute;
  inset: 0;
  width: 100%;
  height: 100%;
}
.node {
  position: absolute;
  width: 107px;
  padding-bottom: 3px;
  border-radius: 6px;
  background: rgba(98, 98, 98, 0.85);
  box-shadow: 0 0 0 1px #252525, 0 2px 5px 1px rgba(0, 0, 0, 0.4);
  font-size: 9px;
}
.node.wide {
  width: 115px;
}
.node.active {
  box-shadow: 0 0 0 1px #e8903a, 0 2px 5px 1px rgba(0, 0, 0, 0.4);
}
.image-texture-a {
  left: 212px;
  top: 159px;
}
.image-texture-b {
  left: 45px;
  top: 384px;
}
.normal-map {
  left: 249px;
  top: 359px;
}
.bump {
  left: 452px;
  top: 315px;
}
.diffuse {
  left: 617px;
  top: 164px;
}
.glossy {
  left: 648px;
  top: 385px;
}
.mix {
  left: 852px;
  top: 178px;
}
.output {
  left: 1038px;
  top: 207px;
}
.node h2 {
  display: flex;
  align-items: center;
  gap: 5px;
  height: 15px;
  padding: 2px 4px 0;
  border-radius: 6px 6px 0 0;
  background: #56535a;
  font-size: 9px;
}
.node.output h2 {
  background: #525252;
}
.node h2::before {
  content: "";
  border: 4px solid transparent;
  border-top: 7px solid #3a3a3a;
  border-bottom: 0;
}
.node.active h2::before {
  border-top-color: #c9501c;
}
.outputs {
  padding-top: 4px;
  margin-bottom: -2px;
}
.row {
  position: relative;
  display: flex;
  align-items: center;
  height: 17px;
  padding: 0 8px 0 14px;
}
.outputs .row {
  justify-content: flex-end;
  padding-right: 18px;
}
.row:has(.num), .row:has(.swatch) {
  padding-left: 8px;
}
.row .num {
  flex: 1;
}
.socket {
  position: absolute;
  left: -4px;
  width: 8px;
  height: 8px;
  border: 1px solid #1c1c1c;
  border-radius: 50%;
}
.outputs .socket {
  left: auto;
  right: -4px;
}
.yellow {
  background: #c7c729;
}
.gray {
  background: #a1a1a1;
}
.violet {
  background: #6363c7;
}
.green {
  background: #63c763;
}
.widgets {
  display: flex;
  flex-direction: column;
  gap: 4px;
  padding: 5px 8px 3px;
}
.node .dark, .node .light, .node .menu, .node .field, .node .num, .node .iconfield, .node .check {
  height: 15px;
}
.node .menu select {
  padding: 0 5px;
}
.node .menu .arrows {
  margin-right: 2px;
}
.node .arrows {
  width: 5px;
  height: 10px;
}
.node .icon {
  width: 12px;
  height: 12px;
}
.node .tool {
  width: 14px;
}
.node .field {
  padding: 0 0 0 4px;
}
.image-pick {
  flex: none;
  width: 22px;
  gap: 2px;
}
.node .check {
  gap: 5px;
  padding-left: 2px;
}
.node input[type="checkbox"] {
  width: 11px;
  height: 11px;
  border-radius: 3px;
}
.node .num {
  padding: 0 3px;
}
.node .num::before {
  margin-right: 3px;
}
.node .num::after {
  margin-left: 3px;
}
.slider.full {
  background: linear-gradient(#6e6e6e, #888);
}
.slider.low {
  background: linear-gradient(90deg, #7a7a7a 7px, transparent 7px), var(--light);
}
.slider.half {
  background: linear-gradient(90deg, #7a7a7a 53%, transparent 53%), var(--light);
}
.swatch {
  width: 22px;
  height: 15px;
  margin-right: 13px;
  border: 1px solid #222;
  border-radius: 4px;
  background: #e7e7e7;
}
.material-name {
  position: absolute;
  left: 30px;
  bottom: 27px;
  color: #fff;
}
.region-tab {
  position: absolute;
  top: 22px;
  width: 13px;
  height: 14px;
  background: rgba(30, 30, 30, 0.5);
  color: #888;
  font-weight: bold;
  line-height: 12px;
}
.tab-left {
  left: 0;
  border-radius: 0 4px 4px 0;
}
.tab-right {
  right: 0;
  width: 15px;
  border-radius: 4px 0 0 4px;
}
.scroll-y, .scroll-x {
  position: absolute;
  border: 1px solid #555;
  border-radius: 6px;
  background: #888;
}
.scroll-y {
  top: 6px;
  right: 5px;
  bottom: 23px;
  width: 11px;
}
.scroll-x {
  left: 5px;
  right: 23px;
  bottom: 5px;
  height: 11px;
}
.node-header {
  gap: 6px;
}
.node-header .menus {
  margin-right: -6px;
}
.use-nodes {
  margin: 0 7px 0 -1px;
}
.spaced {
  margin-left: 10px;
}

/* timeline */
.timeline {
  position: relative;
  flex: none;
  display: flex;
  flex-direction: column;
}
.track {
  width: 100%;
  height: 34px;
  background: #727272;
}
.ruler {
  height: 14px;
  margin: 1px 5px 2px 4px;
  padding-left: 6px;
  display: flex;
  border: 1px solid #444;
  border-radius: 7px;
  background: linear-gradient(#6c6c6c, #888);
  line-height: 12px;
}
.ruler span {
  flex: none;
  width: 2.96%;
  text-align: center;
  white-space: nowrap;
}
.timeline-header {
  height: 27px;
  padding-left: 9px;
  gap: 6px;
}
.range-tools {
  margin-left: -2px;
}
.pill .num {
  flex: 1;
}
.pill > :first-child {
  border-radius: 10px 0 0 10px;
}
.pill > :last-child {
  border-radius: 0 10px 10px 0;
}
.timeline .pill {
  width: 228px;
}
.frame {
  width: 89px;
}
.transport {
  margin-left: 10px;
}
.transport .icon {
  width: 18px;
}
.sync {
  width: 115px;
}
.keytype {
  width: 35px;
  gap: 8px;
}
.keying {
  width: 130px;
}

/* outliner */
.outliner {
  position: relative;
  flex: none;
  height: 145px;
  border-bottom: 1px solid #000;
  display: flex;
  flex-direction: column;
}
.display-mode {
  width: 119px;
}
.find {
  flex: 1;
}
.outliner-body, .properties-body {
  flex: 1;
  min-height: 0;
  overflow: hidden;
  display: flex;
}
.items {
  flex: 1;
  padding-top: 1px;
  list-style: none;
}
.item {
  position: relative;
  display: flex;
  align-items: center;
  height: 20px;
  padding-left: 4px;
  background: #747474;
}
.item:nth-child(odd) {
  background: #6d6d6d;
}
.item.selected {
  background: linear-gradient(90deg, #7c848a 310px, #6d6d6d 310px);
}
/* tree lines */
.item:not(.selected)::after {
  content: "";
  position: absolute;
  left: 28px;
  top: 0;
  bottom: 0;
  width: 1px;
  background: #3c3c3c;
}
.object::before, .selected::before {
  content: "";
  position: absolute;
  left: 33px;
  top: 9px;
  width: 11px;
  height: 1px;
  background: #3c3c3c;
}
.selected::before {
  left: 13px;
}
.item .icon {
  margin-right: 4px;
}
.item > .icon:first-of-type {
  position: relative;
  margin-left: 9px;
}
.item.selected > .icon:first-of-type {
  margin-right: 3px;
}
.child {
  padding-left: 29px;
}
.item.child > .icon:first-of-type {
  margin-left: 4px;
  margin-right: 3px;
}
.leaf {
  padding-left: 33px;
}
.object {
  padding-left: 24px;
}
.halo {
  border-radius: 50%;
  background: rgba(255, 255, 255, 0.3);
  box-shadow: 0 0 0 1px rgba(255, 255, 255, 0.3);
}
.toggle {
  position: relative;
  z-index: 1;
  width: 9px;
  height: 9px;
  border: 1px solid #111;
  border-radius: 50%;
  background: linear-gradient(#111, #111) center / 5px 1px no-repeat, linear-gradient(#111, #111) center / 1px 5px no-repeat, #ddd;
}
.toggle.minus {
  background: linear-gradient(#111, #111) center / 5px 1px no-repeat, #ddd;
}
.item b {
  width: 1px;
  height: 12px;
  margin: 0 10px;
  background: #333;
}
.restrict {
  margin-left: auto;
  align-self: stretch;
  display: flex;
}
.restrict i {
  width: 20px;
  padding: 2px 1px;
  border-left: 1px solid #5c5c5c;
}
.scroll {
  flex: none;
  width: 13px;
  margin: 4px 4px 4px 0;
  border-radius: 7px;
  background: #565656;
}
.thumb {
  border: 1px solid #444;
  border-radius: 7px;
  background: linear-gradient(90deg, #959595, #7e7e7e);
}
.outliner-thumb {
  height: 82%;
}

/* properties */
.properties {
  position: relative;
  flex: 1;
  min-height: 0;
  display: flex;
  flex-direction: column;
}
.tabs {
  margin-left: 3px;
}
.panels {
  flex: 1;
  margin: -7px 4px 0 5px;
}
.panel {
  padding: 0 4px 0 3px;
  border-bottom: 1px solid #3c3c3c;
  box-shadow: 0 1px 0 #8a8a8a;
}
.panel h2 {
  display: flex;
  align-items: center;
  gap: 4px;
  height: 24px;
  padding: 2px 2px 0 4px;
  font-size: 12px;
}
.panel h2.closed {
  height: 23px;
}
.panel h2::before {
  content: "";
  border: 5px solid transparent;
  border-top: 9px solid #262626;
  border-bottom: 0;
}
.panel h2.closed::before {
  border: 5px solid transparent;
  border-left: 9px solid #262626;
  border-right: 0;
}
.panel h2 input {
  margin-right: 2px;
}
.dots {
  width: 11px;
  height: 5px;
  margin-left: auto;
}
.panel-body {
  display: flex;
  flex-direction: column;
  gap: 5px;
  padding: 9px 0 8px;
}
.sampling .panel-body {
  padding-bottom: 5px;
}
.sampling p {
  margin-top: 1px;
}
.group {
  display: flex;
  flex-direction: column;
  gap: 2px;
}
.columns {
  display: grid;
  grid-template-columns: 1fr 1fr;
  gap: 8px;
}
.dimensions {
  padding-bottom: 5px;
}
.border-row {
  padding-top: 2px;
}
.stack .num {
  border-radius: 0;
}
.stack > * {
  margin-top: -1px;
  height: 21px;
}
.stack > :first-child {
  margin-top: 0;
  height: 20px;
}
.stack > .num:first-child {
  border-radius: 10px 10px 0 0;
}
.stack.continued > .num:first-child {
  border-radius: 0;
}
.stack > .num:last-child {
  border-radius: 0 0 10px 10px;
}
.stack > .menu:first-child {
  border-radius: 4px 4px 0 0;
}
.seed {
  display: flex;
}
.seed .num {
  flex: 1;
  border-radius: 10px 0 0 0;
}
.seed .tool {
  border-left: none;
  border-radius: 0 4px 0 0;
}
.properties .num input {
  padding-right: 1px;
}
.join .menu {
  flex: 1;
}
.choices button {
  flex: 1;
}
.depth {
  display: flex;
  justify-content: space-between;
}
.depth .choices {
  width: 230px;
}
.pattern {
  width: 232px;
}
.compression {
  background: linear-gradient(90deg, #787878 17%, transparent 17%), var(--light);
}
.properties-body .scroll {
  display: flex;
  flex-direction: column;
}
.properties-thumb {
  margin-top: 182px;
  height: 341px;
}
```
FILE: script.js
```javascript
const NS = "http://www.w3.org/2000/svg";

const addLine = (svg, x1, y1, x2, y2, color) => {
  const line = document.createElementNS(NS, "line");
  line.setAttribute("x1", x1);
  line.setAttribute("y1", y1);
  line.setAttribute("x2", x2);
  line.setAttribute("y2", y2);
  line.setAttribute("stroke", color);
  svg.appendChild(line);
};

const addRect = (svg, x, y, width, height, color) => {
  const rect = document.createElementNS(NS, "rect");
  rect.setAttribute("x", x);
  rect.setAttribute("y", y);
  rect.setAttribute("width", width);
  rect.setAttribute("height", height);
  rect.setAttribute("fill", color);
  svg.appendChild(rect);
};

// grid lines run out from the origin of the node space
const drawGrid = () => {
  const grid = document.getElementById("grid");
  const width = grid.clientWidth - 17;
  const height = grid.clientHeight - 17;
  const origin = { x: 469, y: 559 };
  const step = 15.34;

  [false, true].forEach((major) => {
    for (let i = -60; i <= 60; i++) {
      if ((i % 5 === 0) !== major) continue;
      const color = i === 0 ? "#202020" : major ? "#2a2a2a" : "#323232";
      const x = Math.round(origin.x + i * step) + 0.5;
      const y = Math.round(origin.y + i * step) + 0.5;
      if (x > 0 && x < width) addLine(grid, x, 0, x, height, color);
      if (y > 0 && y < height) addLine(grid, 0, y, width, y, color);
    }
  });
};

const drawTimeline = () => {
  const track = document.getElementById("track");
  const ruler = document.getElementById("ruler");
  const frameX = (frame) => Math.round(205.6 + frame * 3.56);
  const width = track.clientWidth;

  addRect(track, 0, 0, frameX(1), 34, "#424242");
  addRect(track, frameX(250), 0, width - frameX(250), 34, "#424242");

  for (let frame = -55; frame <= 280; frame += 5) {
    const inRange = frame > 0 && frame < 250;
    const major = frame % 10 === 0;
    const color = inRange ? (major ? "#5c5c5c" : "#696969") : (major ? "#343434" : "#3c3c3c");
    addLine(track, frameX(frame) + 0.5, 0, frameX(frame) + 0.5, 34, color);
  }
  addRect(track, frameX(1) - 1, 0, 3, 34, "#5fc03f");

  for (let frame = -50; frame <= 280; frame += 10) {
    const span = document.createElement("span");
    span.textContent = frame;
    ruler.appendChild(span);
  }
};

drawGrid();
drawTimeline();
```
